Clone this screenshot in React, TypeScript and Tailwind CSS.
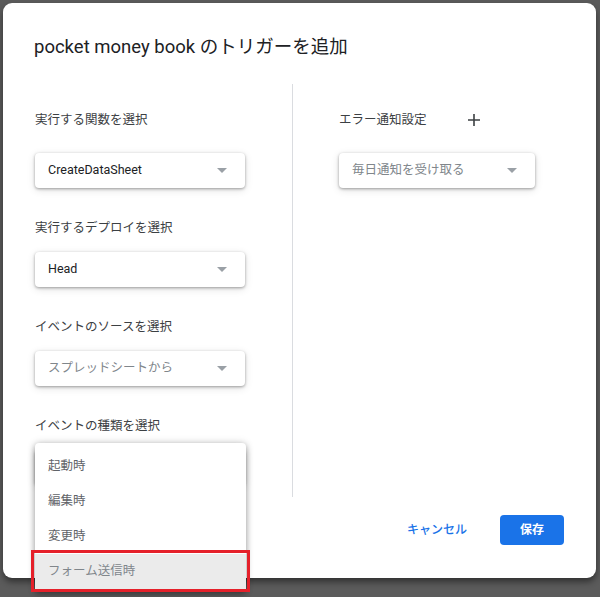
import React from 'react';

const font = { fontFamily: 'Roboto, "Noto Sans CJK JP", sans-serif' };

function Caret() {
  return (
    <svg width="10" height="5" viewBox="0 0 10 5" className="shrink-0">
      <path d="M0 0 L10 0 L5 5 Z" fill="#9aa0a6" />
    </svg>
  );
}

function Select({ value, muted = false, width = 'w-[210px]' }: { value: string; muted?: boolean; width?: string }) {
  return (
    <div
      className={`${width} h-[35px] flex items-center justify-between pl-[13px] pr-[18px] bg-white rounded-[4px] shadow-[0_1px_3px_rgba(0,0,0,0.35),0_2px_8px_rgba(0,0,0,0.12)]`}
    >
      <span className={`text-[12.5px] ${muted ? 'text-[#80868b]' : 'text-[#202124]'}`}>{value}</span>
      <Caret />
    </div>
  );
}

function Field({ label, first = false, children }: { label: string; first?: boolean; children: React.ReactNode }) {
  return (
    <div className="flex flex-col">
      <div className="h-[20px] leading-[20px] text-[12.5px] text-[#3c4043]">{label}</div>
      <div className={first ? 'mt-[23px]' : 'mt-[14px]'}>{children}</div>
    </div>
  );
}

const menuItems = ['起動時', '編集時', '変更時'];

export default function App() {
  return (
    <div className="w-[600px] h-[597px] bg-[#5b5b5b] overflow-hidden pt-[3px] pl-[3px]" style={font}>
      <div className="relative w-[593px] h-[575px] bg-white rounded-[9px] shadow-[0_4px_6px_rgba(0,0,0,0.45)] flex flex-col">
        <h1 className="pt-[30px] pl-[31px] h-[58px] leading-[28px] text-[18.5px] text-[#202124]">
          pocket money book のトリガーを追加
        </h1>

        <div className="mt-[23px] h-[413px] flex">
          <div className="w-[289px] pl-[32px] pt-[26px] flex flex-col gap-[30px]">
            <Field label="実行する関数を選択" first>
              <Select value="CreateDataSheet" />
            </Field>
            <Field label="実行するデプロイを選択">
              <Select value="Head" />
            </Field>
            <Field label="イベントのソースを選択">
              <Select value="スプレッドシートから" muted />
            </Field>
            <Field label="イベントの種類を選択">
              <div className="relative">
                <Select value="起動時" muted />
                <div className="absolute z-10 left-0 top-[-7px] w-[211px] pt-[6px] pb-[3px] bg-white rounded-[4px] shadow-[0_2px_6px_rgba(0,0,0,0.35),0_0_10px_rgba(0,0,0,0.12)]">
                  {menuItems.map((item) => (
                    <div key={item} className="h-[35px] flex items-center pl-[13px] text-[12.5px] text-[#5f6368]">
                      {item}
                    </div>
                  ))}
                  <div className="relative h-[35px] flex items-center pl-[13px] text-[12.5px] text-[#80868b] bg-[#ebebeb]">
                    フォーム送信時
                    <div className="absolute left-[-4px] right-[-4px] top-[-4px] bottom-[-3px] border-[3px] border-[#e5202a]" />
                  </div>
                </div>
              </div>
            </Field>
          </div>

          <div className="w-px bg-[#dadce0]" />

          <div className="pl-[46px] pt-[26px] flex flex-col">
            <div className="h-[20px] flex items-center text-[12.5px] text-[#3c4043]">
              <span>エラー通知設定</span>
              <svg width="12" height="12" viewBox="0 0 12 12" className="ml-[41px]">
                <path d="M6 0 V12 M0 6 H12" stroke="#3c4043" strokeWidth="1.6" />
              </svg>
            </div>
            <div className="mt-[23px]">
              <Select value="毎日通知を受け取る" muted width="w-[196px]" />
            </div>
          </div>
        </div>

        <div className="mt-[18px] flex items-center justify-end pr-[32px]">
          <button className="h-[30px] px-[8px] mr-[25px] text-[12px] font-medium text-[#1a73e8]">
            キャンセル
          </button>
          <button className="w-[64px] h-[30px] rounded-[4px] bg-[#1a73e8] text-white text-[12px] font-bold">
            保存
          </button>
        </div>
      </div>
    </div>
  );
}
